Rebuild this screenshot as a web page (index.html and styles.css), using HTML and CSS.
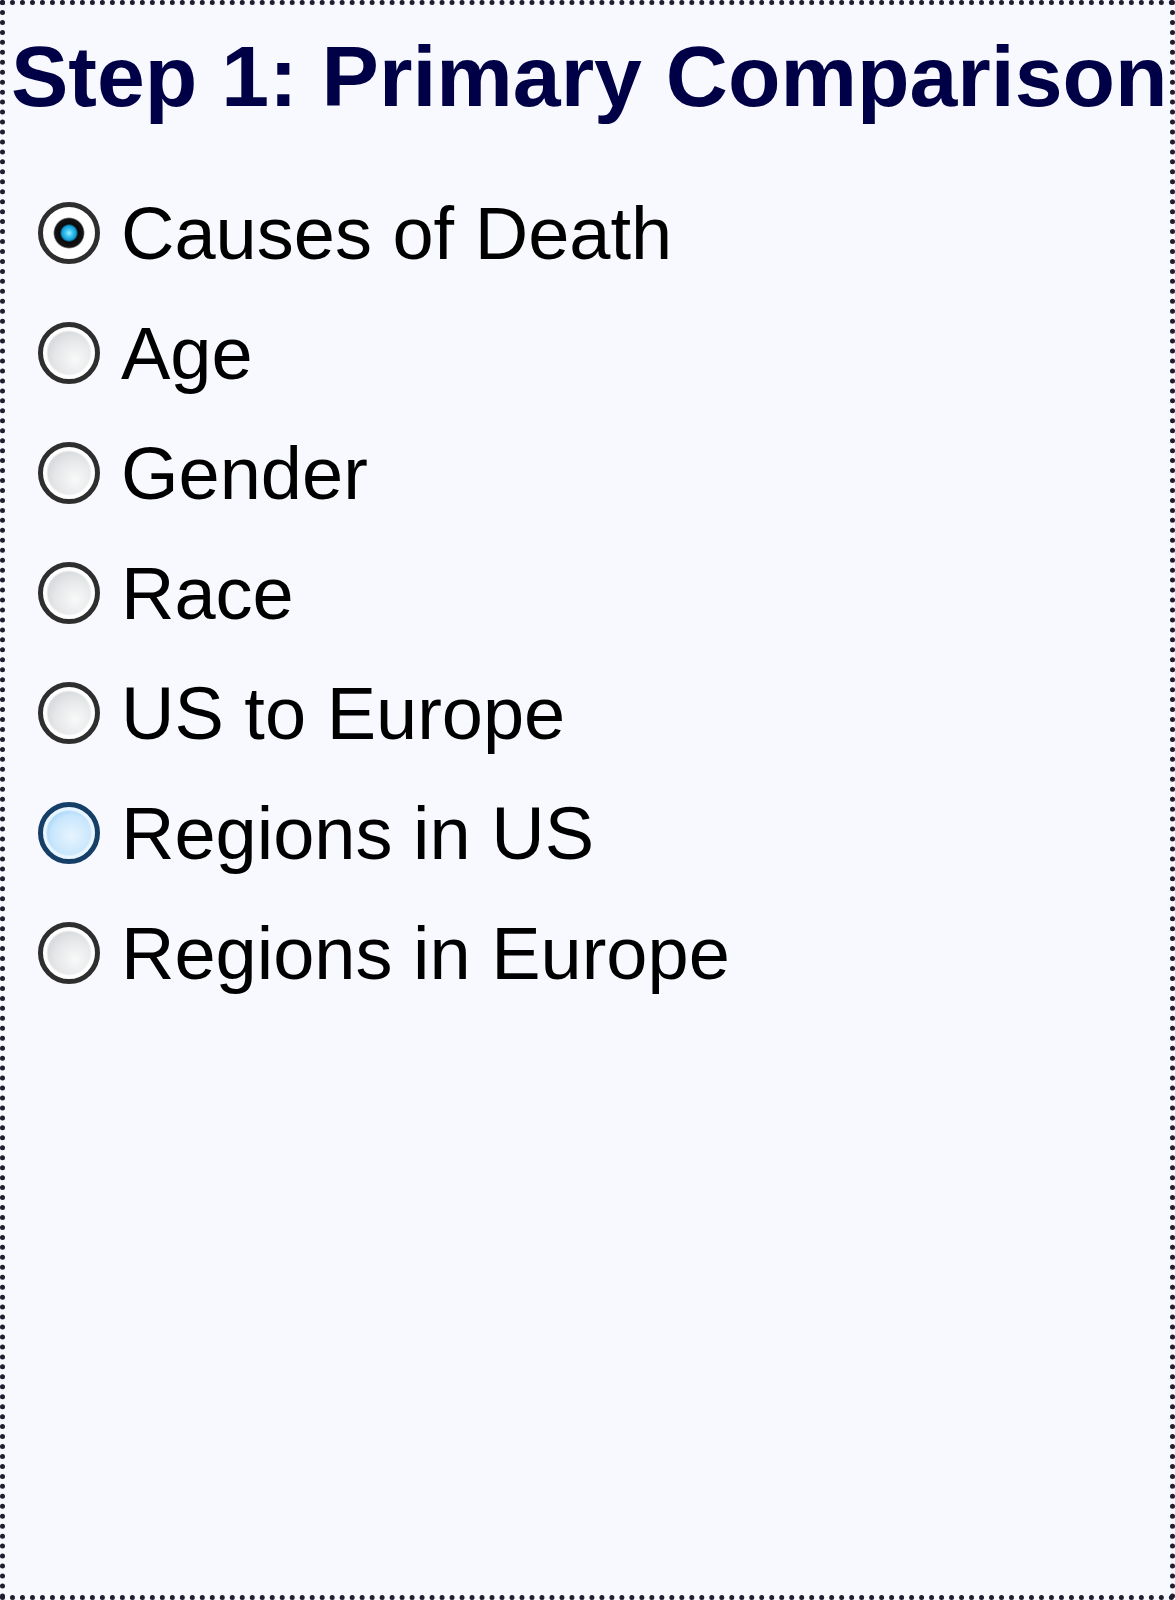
FILE: index.html
```html
<!DOCTYPE html>
<html>
<head>
<meta charset="utf-8">
<title>Step 1: Primary Comparison</title>
<link rel="stylesheet" href="styles.css">
</head>
<body>
<div class="panel">
  <h3 class="panel-title">Step 1: Primary Comparison</h3>
  <div class="options">
    <label class="option"><input class="radio" type="radio" name="primary" checked><span class="option-text">Causes of Death</span></label>
    <label class="option"><input class="radio" type="radio" name="primary"><span class="option-text">Age</span></label>
    <label class="option"><input class="radio" type="radio" name="primary"><span class="option-text">Gender</span></label>
    <label class="option"><input class="radio" type="radio" name="primary"><span class="option-text">Race</span></label>
    <label class="option"><input class="radio" type="radio" name="primary"><span class="option-text">US to Europe</span></label>
    <label class="option"><input class="radio radio-hot" type="radio" name="primary"><span class="option-text">Regions in US</span></label>
    <label class="option"><input class="radio" type="radio" name="primary"><span class="option-text">Regions in Europe</span></label>
  </div>
</div>
</body>
</html>
```
FILE: styles.css
```css
html, body {
  margin: 0;
  padding: 0;
  background: #ffffff;
}

.panel {
  box-sizing: border-box;
  width: 1175px;
  height: 1600px;
  border: 5px dotted #1e1e30;
  background: #f8f8ff;
  padding: 21px 0 0 6px;
  font-family: "Liberation Sans", Arial, sans-serif;
}

.panel-title {
  margin: 0;
  font-size: 86px;
  line-height: 100px;
  font-weight: bold;
  color: #000046;
  white-space: nowrap;
}

.options {
  margin-top: 48px;
  display: flex;
  flex-direction: column;
  padding-left: 27px;
}

.option {
  display: flex;
  align-items: flex-start;
  height: 120px;
  cursor: default;
}

.radio {
  -webkit-appearance: none;
  appearance: none;
  box-sizing: border-box;
  flex: 0 0 auto;
  width: 62px;
  height: 62px;
  margin: 28px 21px 0 0;
  border-radius: 50%;
  border: 5px solid #2e2e2e;
  background:
    radial-gradient(circle closest-side, rgba(255,255,255,0) 80%, #ffffff 88%, #ffffff 100%),
    radial-gradient(circle at 62% 62%, #f9f9f9 0, #e4e6e8 45%, #cdd0d4 80%, #c4c7cb 100%);
}

.radio:checked {
  background:
    radial-gradient(circle closest-side, #9af0ff 0, #3cc6f2 14%, #129ad4 28%, #0a0a0a 35%, #151515 55%, #ffffff 61%, #ffffff 100%);
}

.radio-hot {
  border-color: #153f66;
  background:
    radial-gradient(circle closest-side, rgba(255,255,255,0) 82%, #eaf6ff 90%, #eaf6ff 100%),
    radial-gradient(circle at 55% 55%, #e6f4fe 0, #c8e6fc 50%, #94cdf7 76%, #6ab8f3 86%, #b8dcfa 100%);
}

.option-text {
  font-size: 74px;
  line-height: 120px;
  color: #000000;
  white-space: nowrap;
}
```
